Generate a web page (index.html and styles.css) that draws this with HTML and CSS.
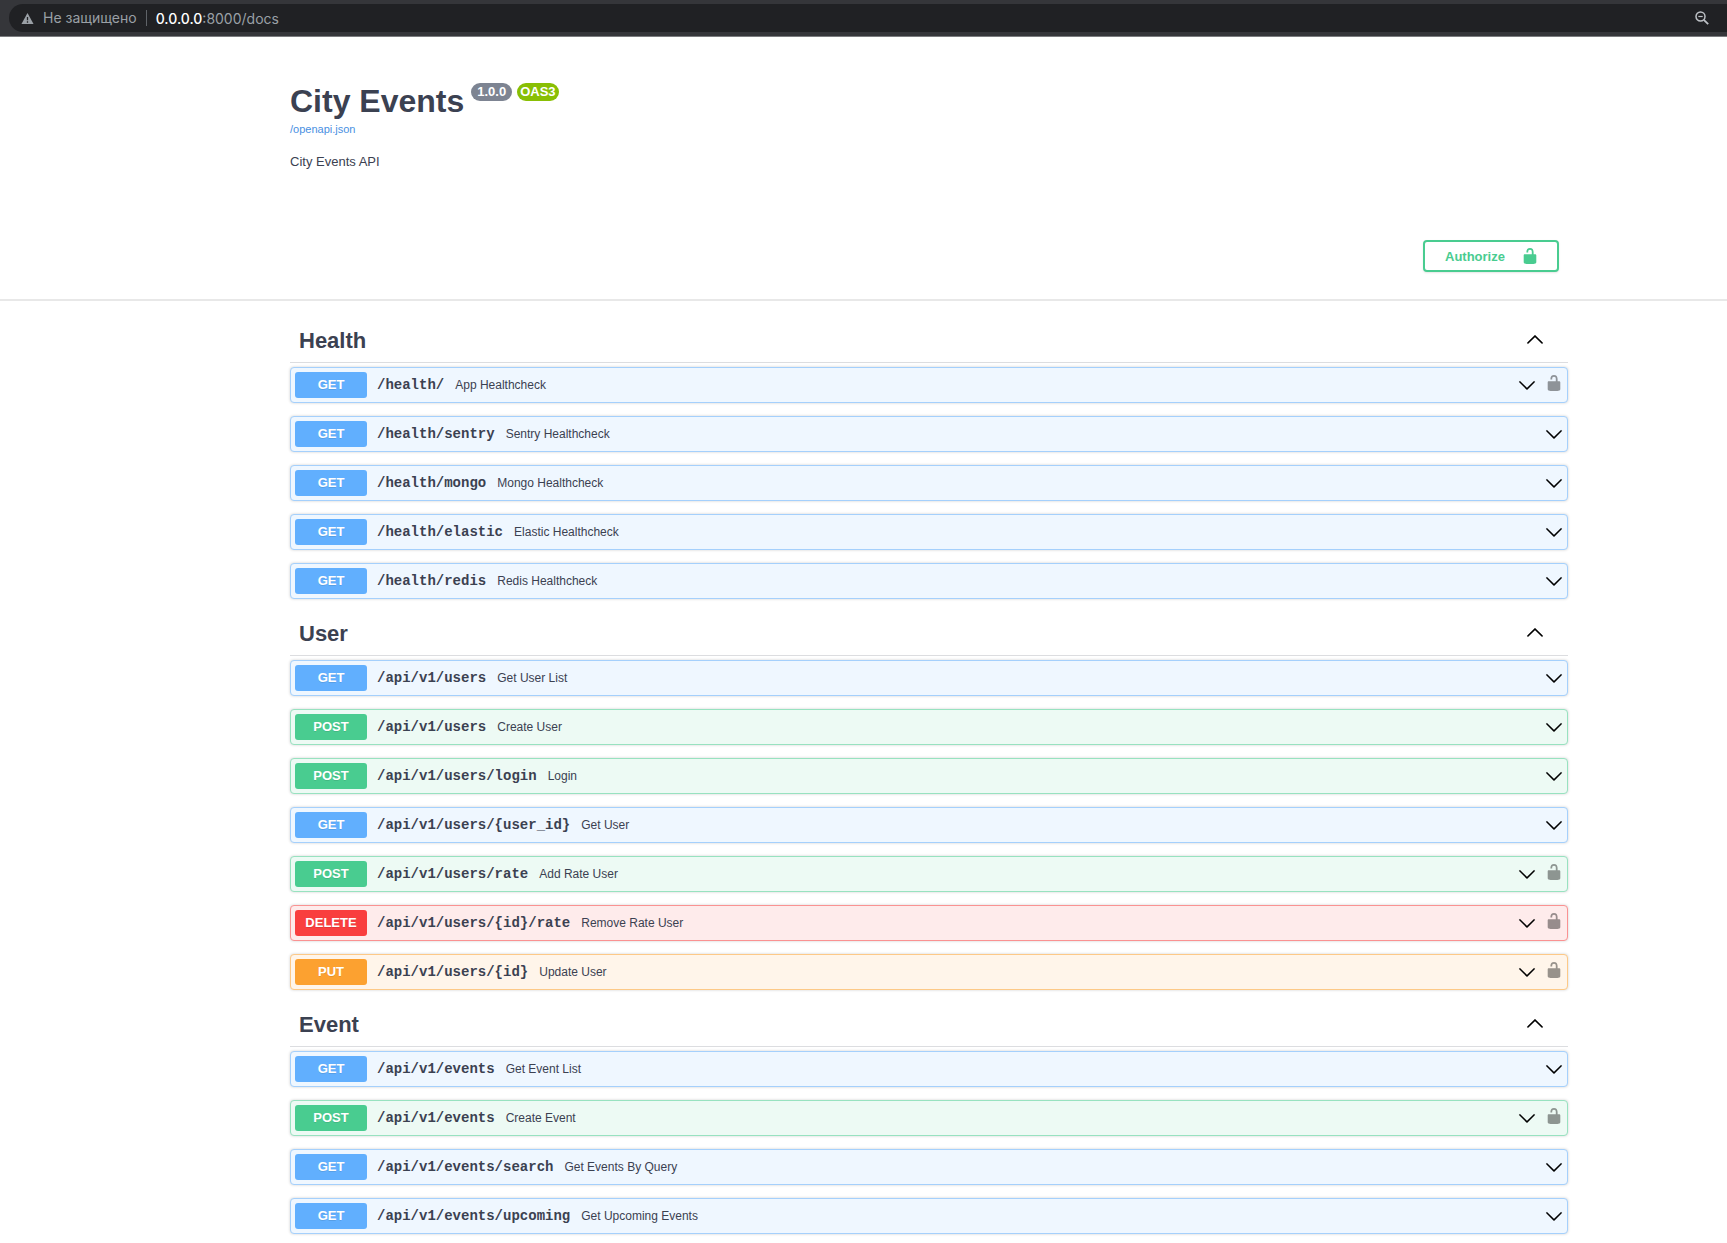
FILE: index.html
```html
<!DOCTYPE html>
<html lang="ru">
<head>
<meta charset="utf-8">
<title>City Events</title>
<link rel="stylesheet" href="styles.css">
</head>
<body>
<svg class="sprite" aria-hidden="true">
  <symbol id="down" viewBox="0 0 20 20"><path d="M17.418 6.109c.272-.268.709-.268.979 0s.271.701 0 .969l-7.908 7.83c-.27.268-.707.268-.979 0l-7.908-7.83c-.27-.268-.27-.701 0-.969.271-.268.709-.268.979 0L10 13.25l7.418-7.141z" stroke="#000" stroke-width=".4"/></symbol>
  <symbol id="up" viewBox="0 0 20 20"><path d="M17.418 14.908c.272.268.709.268.979 0s.271-.701 0-.969l-7.908-7.83c-.27-.268-.707-.268-.979 0l-7.908 7.83c-.27.268-.27.701 0 .969.271.268.709.268.979 0L10 7.767l7.418 7.141z" stroke="#000" stroke-width=".4"/></symbol>
  <symbol id="lock" viewBox="0 0 20 20"><path d="M15.8 8H14V5.6C14 2.703 12.665 1 10 1 7.334 1 6 2.703 6 5.6V6h2v-.801C8 3.754 8.797 3 10 3c1.203 0 2 .754 2 2.199V8H4c-.553 0-1 .646-1 1.199V17c0 .549.428 1.139.951 1.307l1.197.387C5.672 18.861 6.55 19 7.1 19h5.8c.549 0 1.428-.139 1.951-.307l1.196-.387c.524-.167.953-.757.953-1.306V9.199C17 8.646 16.352 8 15.8 8z"/></symbol>
</svg>

<div class="browser">
  <div class="address">
    <svg class="warn" viewBox="0 0 14 14" aria-hidden="true"><path fill="#9aa0a6" d="M7 1l6.500 12H.5z"/><path fill="#202124" d="M6.300 5.500h1.400v3.500H6.300zM6.300 10h1.400v1.500H6.300z"/></svg>
    <span class="insecure">Не защищено</span>
    <span class="url"><b>0.0.0.0</b>:8000/docs</span>
    <button class="icon zoom" aria-label="Масштаб"><svg viewBox="0 0 14 14" fill="none" stroke="#bdc1c6"><circle cx="5.500" cy="5.500" r="4.500" stroke-width="1.500"/><path d="M3.300 5.500h4.400" stroke-width="1.200"/><path d="M8.800 8.800l4.400 4.400" stroke-width="1.800"/></svg></button>
  </div>
</div>

<header class="info">
  <div class="title">
    <h1>City Events</h1>
    <span class="pill">1.0.0</span>
    <span class="pill oas">OAS3</span>
  </div>
  <a class="spec" href="/openapi.json">/openapi.json</a>
  <p>City Events API</p>
</header>

<div class="scheme">
  <button class="authorize"><span>Authorize</span><svg aria-hidden="true"><use href="#lock"/></svg></button>
</div>

<main>
  <section>
    <div class="tag"><h2>Health</h2><button class="icon" aria-label="Collapse"><svg><use href="#up"/></svg></button></div>
    <div class="op get"><span class="method">GET</span><a class="path" href="#">/health/</a><span class="desc">App Healthcheck</span><button class="icon" aria-label="Expand"><svg><use href="#down"/></svg></button><button class="icon lock" aria-label="Authorize"><svg><use href="#lock"/></svg></button></div>
    <div class="op get"><span class="method">GET</span><a class="path" href="#">/health/sentry</a><span class="desc">Sentry Healthcheck</span><button class="icon" aria-label="Expand"><svg><use href="#down"/></svg></button></div>
    <div class="op get"><span class="method">GET</span><a class="path" href="#">/health/mongo</a><span class="desc">Mongo Healthcheck</span><button class="icon" aria-label="Expand"><svg><use href="#down"/></svg></button></div>
    <div class="op get"><span class="method">GET</span><a class="path" href="#">/health/elastic</a><span class="desc">Elastic Healthcheck</span><button class="icon" aria-label="Expand"><svg><use href="#down"/></svg></button></div>
    <div class="op get"><span class="method">GET</span><a class="path" href="#">/health/redis</a><span class="desc">Redis Healthcheck</span><button class="icon" aria-label="Expand"><svg><use href="#down"/></svg></button></div>
  </section>

  <section>
    <div class="tag"><h2>User</h2><button class="icon" aria-label="Collapse"><svg><use href="#up"/></svg></button></div>
    <div class="op get"><span class="method">GET</span><a class="path" href="#">/api/v1/users</a><span class="desc">Get User List</span><button class="icon" aria-label="Expand"><svg><use href="#down"/></svg></button></div>
    <div class="op post"><span class="method">POST</span><a class="path" href="#">/api/v1/users</a><span class="desc">Create User</span><button class="icon" aria-label="Expand"><svg><use href="#down"/></svg></button></div>
    <div class="op post"><span class="method">POST</span><a class="path" href="#">/api/v1/users/login</a><span class="desc">Login</span><button class="icon" aria-label="Expand"><svg><use href="#down"/></svg></button></div>
    <div class="op get"><span class="method">GET</span><a class="path" href="#">/api/v1/users/{user_id}</a><span class="desc">Get User</span><button class="icon" aria-label="Expand"><svg><use href="#down"/></svg></button></div>
    <div class="op post"><span class="method">POST</span><a class="path" href="#">/api/v1/users/rate</a><span class="desc">Add Rate User</span><button class="icon" aria-label="Expand"><svg><use href="#down"/></svg></button><button class="icon lock" aria-label="Authorize"><svg><use href="#lock"/></svg></button></div>
    <div class="op delete"><span class="method">DELETE</span><a class="path" href="#">/api/v1/users/{id}/rate</a><span class="desc">Remove Rate User</span><button class="icon" aria-label="Expand"><svg><use href="#down"/></svg></button><button class="icon lock" aria-label="Authorize"><svg><use href="#lock"/></svg></button></div>
    <div class="op put"><span class="method">PUT</span><a class="path" href="#">/api/v1/users/{id}</a><span class="desc">Update User</span><button class="icon" aria-label="Expand"><svg><use href="#down"/></svg></button><button class="icon lock" aria-label="Authorize"><svg><use href="#lock"/></svg></button></div>
  </section>

  <section>
    <div class="tag"><h2>Event</h2><button class="icon" aria-label="Collapse"><svg><use href="#up"/></svg></button></div>
    <div class="op get"><span class="method">GET</span><a class="path" href="#">/api/v1/events</a><span class="desc">Get Event List</span><button class="icon" aria-label="Expand"><svg><use href="#down"/></svg></button></div>
    <div class="op post"><span class="method">POST</span><a class="path" href="#">/api/v1/events</a><span class="desc">Create Event</span><button class="icon" aria-label="Expand"><svg><use href="#down"/></svg></button><button class="icon lock" aria-label="Authorize"><svg><use href="#lock"/></svg></button></div>
    <div class="op get"><span class="method">GET</span><a class="path" href="#">/api/v1/events/search</a><span class="desc">Get Events By Query</span><button class="icon" aria-label="Expand"><svg><use href="#down"/></svg></button></div>
    <div class="op get"><span class="method">GET</span><a class="path" href="#">/api/v1/events/upcoming</a><span class="desc">Get Upcoming Events</span><button class="icon" aria-label="Expand"><svg><use href="#down"/></svg></button></div>
  </section>
</main>
</body>
</html>
```
FILE: styles.css
```css
* {
  box-sizing: border-box;
}

body {
  margin: 0;
  background: #fff;
  color: #3b4151;
  font-family: "Liberation Sans", Arial, sans-serif;
  font-size: 12px;
}

h1, h2, p {
  margin: 0;
}

a {
  text-decoration: none;
}

button {
  font-family: inherit;
  cursor: pointer;
}

.sprite {
  display: none;
}

.icon {
  display: flex;
  flex: none;
  padding: 0;
  border: 0;
  background: none;
}

.icon svg {
  width: 18px;
  height: 18px;
}

/* Browser address bar */
.browser {
  padding: 4px 0 4px 9px;
  border-bottom: 1px solid #7b7c7f;
  background: #35363a;
}

.address {
  display: flex;
  align-items: center;
  height: 28px;
  padding: 0 18px 0 12px;
  border-radius: 14px 0 0 14px;
  background: #202124;
  color: #9aa0a6;
  font-family: Inter, Roboto, sans-serif;
  font-size: 14px;
}

.warn {
  width: 13px;
  height: 13px;
}

.insecure {
  margin-left: 9px;
  padding-right: 9px;
  border-right: 1px solid #5f6368;
  line-height: 16px;
}

.url {
  flex: 1;
  padding-left: 9px;
}

.url b {
  color: #fff;
  font-weight: 500;
}

.zoom svg {
  width: 14px;
  height: 14px;
}

/* API title */
.info,
.scheme,
main {
  padding-right: 159px;
  padding-left: 290px;
}

.info {
  padding-top: 46px;
}

.title {
  display: flex;
  align-items: flex-start;
  gap: 5px;
}

h1 {
  padding-right: 2px;
  font-size: 32px;
  line-height: 36px;
}

.pill {
  padding: 0 6px;
  border-radius: 9px;
  background: #7d8492;
  color: #fff;
  font-size: 13px;
  font-weight: bold;
  line-height: 18px;
}

.pill.oas {
  padding: 0 3px;
  background: #89bf04;
}

.spec {
  display: block;
  margin-top: 3px;
  color: #4990e2;
  font-size: 11px;
  line-height: 14px;
}

.info p {
  margin-top: 18px;
  font-size: 13px;
  line-height: 16px;
}

/* Authorize bar */
.scheme {
  display: flex;
  justify-content: flex-end;
  padding-top: 70px;
  padding-right: 168px;
  padding-bottom: 27px;
  border-bottom: 2px solid #e8e8e8;
}

.authorize {
  display: flex;
  align-items: center;
  justify-content: space-between;
  width: 136px;
  height: 32px;
  padding: 0 18px 0 20px;
  border: 2px solid #49cc90;
  border-radius: 4px;
  background: #fff;
  color: #49cc90;
  font-size: 13px;
  font-weight: bold;
  box-shadow: 0 1px 2px rgba(0, 0, 0, 0.1);
}

.authorize svg {
  width: 18px;
  height: 18px;
  fill: #49cc90;
}

/* Operation groups */
main {
  padding-top: 18px;
}

.tag {
  display: flex;
  align-items: center;
  justify-content: space-between;
  height: 44px;
  margin-bottom: 4px;
  padding: 0 24px 0 9px;
  border-bottom: 1px solid #dcdde0;
}

.tag .icon {
  margin-bottom: 3px;
}

h2 {
  font-size: 22px;
  line-height: 28px;
}

.op {
  display: flex;
  align-items: center;
  height: 36px;
  margin-bottom: 13px;
  padding: 4px;
  border: 1px solid;
  border-radius: 4px;
  box-shadow: 0 0 3px rgba(0, 0, 0, 0.19);
}

.method {
  width: 72px;
  border-radius: 3px;
  color: #fff;
  font-size: 13px;
  font-weight: bold;
  line-height: 26px;
  text-align: center;
  text-shadow: 0 1px 0 rgba(0, 0, 0, 0.1);
}

.path {
  padding: 0 11px 0 10px;
  color: #3b4151;
  font-family: "Liberation Mono", "Courier New", monospace;
  font-size: 14px;
  font-weight: bold;
}

.desc {
  flex: 1;
}

.lock {
  margin: 0 0 4px 9px;
  opacity: 0.4;
}

.get {
  border-color: #a5d0fc;
  background: #eff7ff;
}

.get .method {
  background: #61affe;
}

.post {
  border-color: #98e2c0;
  background: #edfaf4;
}

.post .method {
  background: #49cc90;
}

.delete {
  border-color: #fa9292;
  background: #feebeb;
}

.delete .method {
  background: #f93e3e;
}

.put {
  border-color: #fdc987;
  background: #fff5ea;
}

.put .method {
  background: #fca130;
}
```
